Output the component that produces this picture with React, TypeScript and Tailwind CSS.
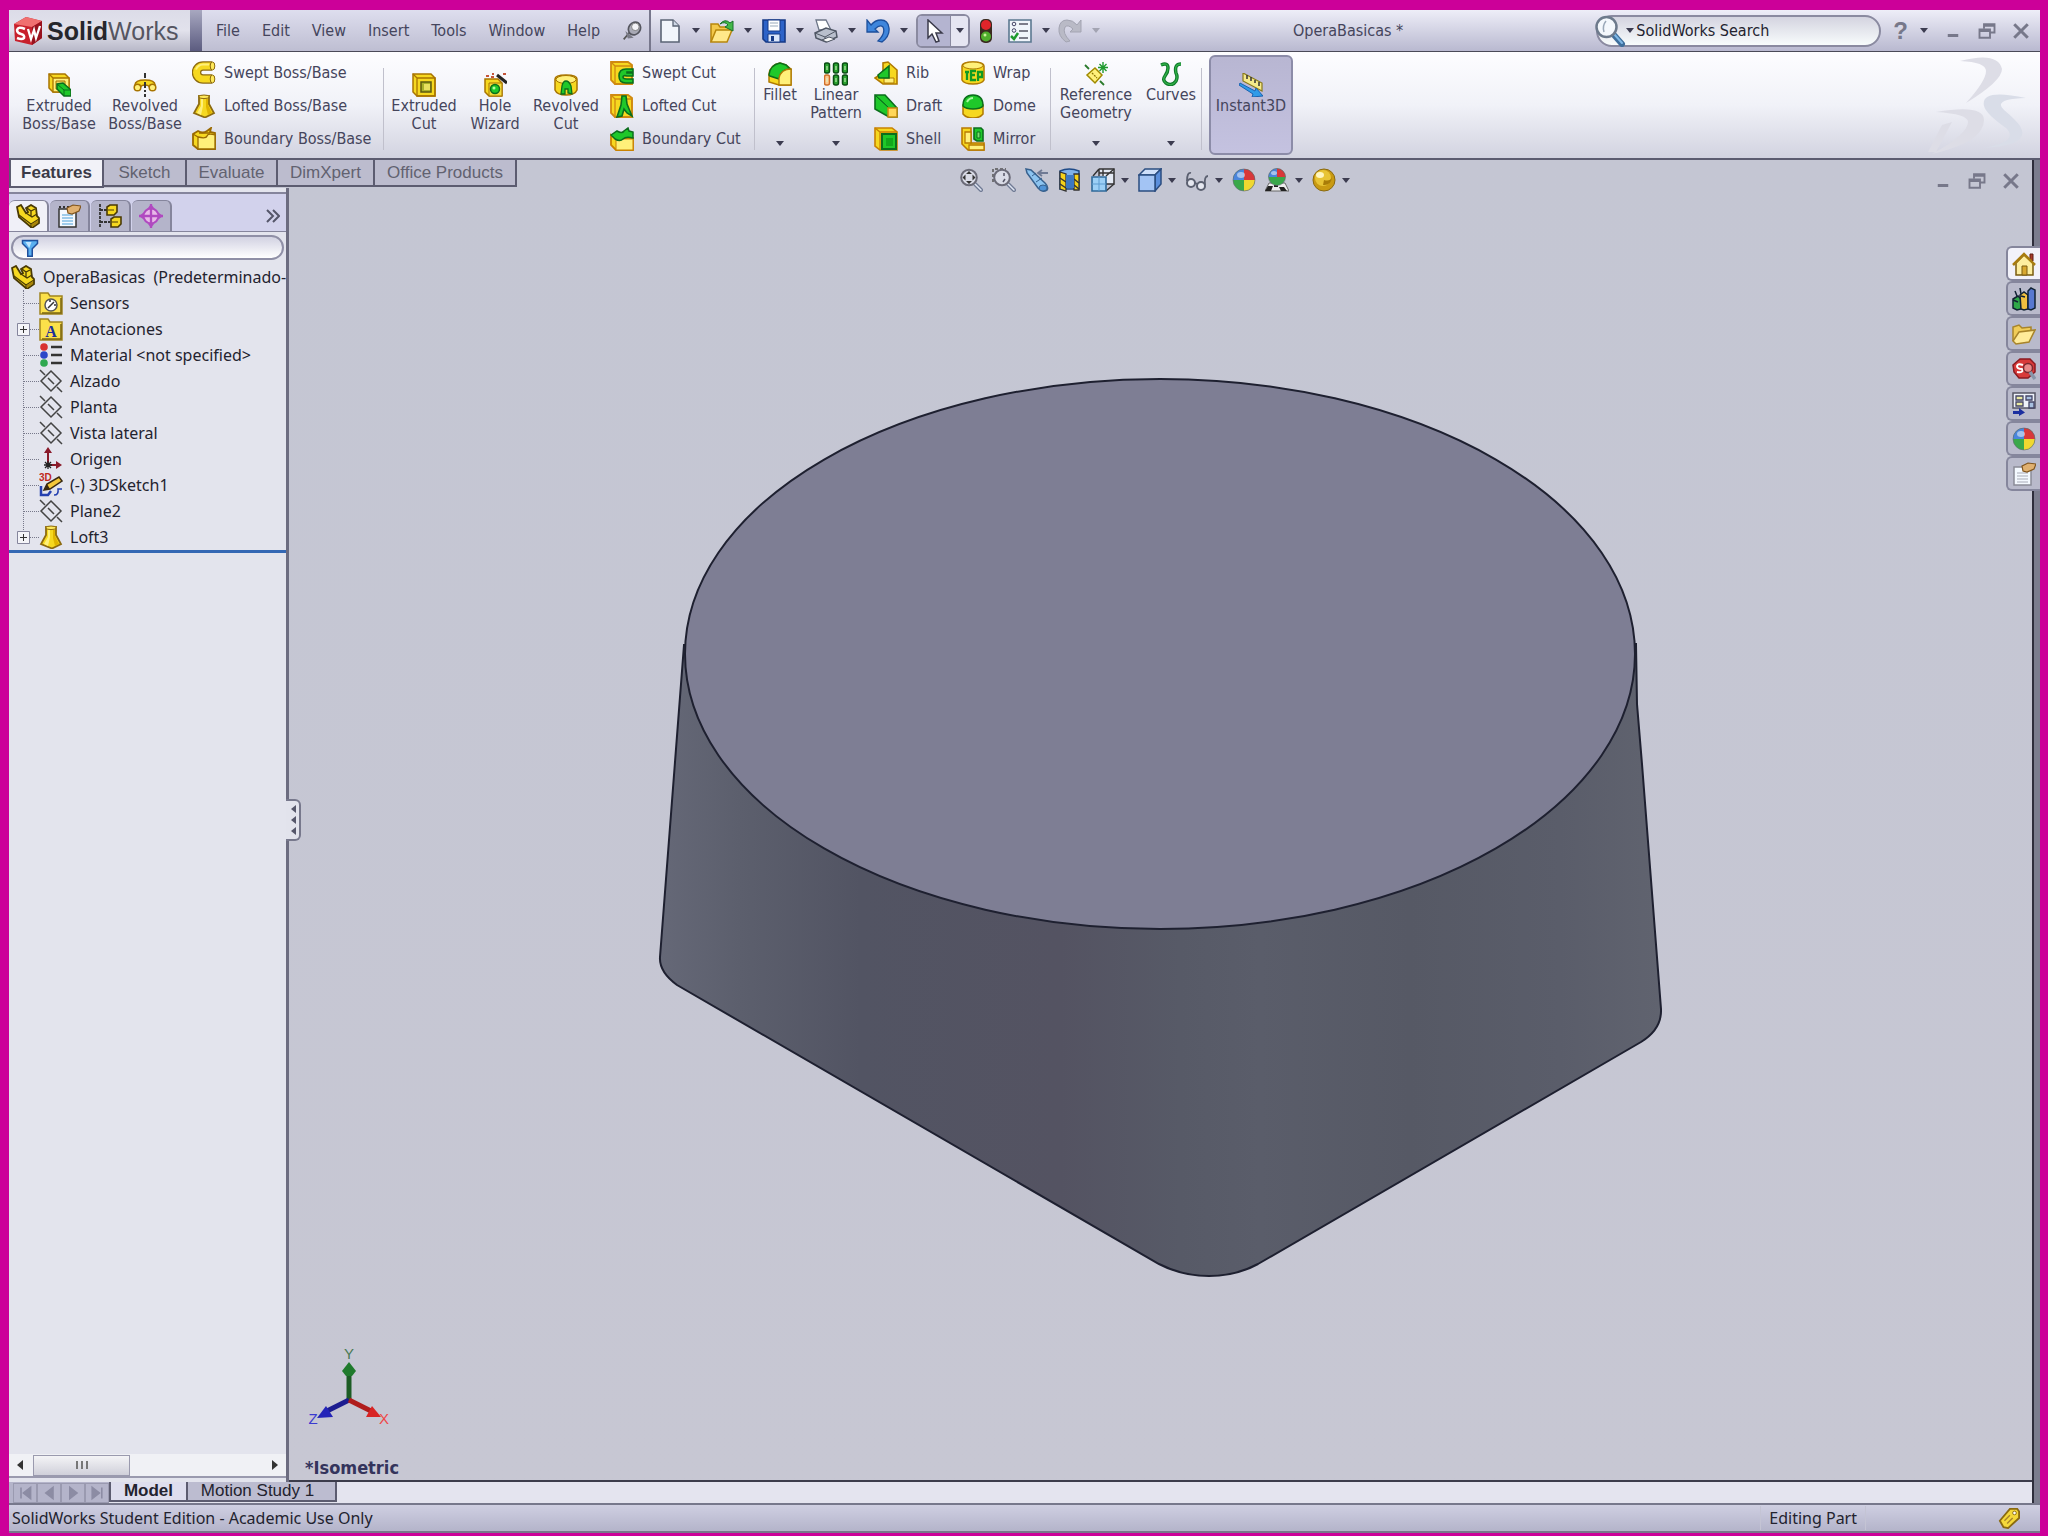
import type { ReactNode } from "react";

const UI = "font-['DejaVu_Sans_Condensed','DejaVu_Sans',sans-serif]";
const TREE = "font-['Noto_Sans','Open_Sans',sans-serif]";
const ARIAL = "font-['Liberation_Sans',Arial,sans-serif]";

type SvgProps = { children: ReactNode; className?: string; box?: string };

const Svg = ({ children, className = "size-6", box = "0 0 24 24" }: SvgProps) => (
  <svg viewBox={box} className={`shrink-0 ${className}`} fill="none" aria-hidden="true">
    {children}
  </svg>
);

const Caret = ({ className = "fill-[#3c3c50]" }: { className?: string }) => (
  <svg viewBox="0 0 8 5" className={`h-[5px] w-2 shrink-0 ${className}`} aria-hidden="true">
    <path d="M0 0h8L4 5z" />
  </svg>
);

const Y = "#f6d820";
const YL = "#fff07a";
const YS = "#a87400";
const G = "#1fc82a";
const GS = "#0b6e1c";

/* ---------- ribbon icons ---------- */

const ExtrudeBoss = () => (
  <Svg>
    <path d="M2 1h16l4 4v14H6l-4-4z" fill={Y} stroke={YS} strokeWidth="1.500" />
    <path d="M6 5h16v14H6zM2 1l4 4" fill={YL} stroke={YS} strokeWidth="1.300" />
    <path d="M9 8h9v8H9z" fill="#e8d860" stroke={YS} />
    <path d="M10 11l6-1 8 7v6h-7l-7-7z" fill={G} stroke={GS} strokeWidth="1.500" />
    <path d="M17 17h7M17 17v6M17 17l-7-6" stroke={GS} />
  </Svg>
);

const RevolveBoss = () => (
  <Svg>
    <path d="M12 0v5M12 8v3M12 17v2M12 21v3" stroke="#333" strokeWidth="2" />
    <path d="M2 12q0-5 10-5t10 5v3h-5q-1-3-5-3t-5 3H2z" fill={Y} stroke={YS} strokeWidth="1.500" />
    <circle cx="4.500" cy="14.500" r="3.300" fill={YL} stroke={YS} strokeWidth="1.500" />
    <circle cx="19.500" cy="14.500" r="3.300" fill={YL} stroke={YS} strokeWidth="1.500" />
    <path d="M12 9v6" stroke="#333" strokeWidth="2" />
  </Svg>
);

const SweptBoss = () => (
  <Svg>
    <path d="M20 5H11a6.500 6.500 0 000 13h9" stroke="#8d6b10" strokeWidth="9.500" />
    <path d="M19 5H11a6.500 6.500 0 000 13h8" stroke={Y} strokeWidth="7" />
    <path d="M17 3.500H11a8 8 0 00-7 5" stroke={YL} strokeWidth="2" />
    <ellipse cx="20.500" cy="5" rx="2.300" ry="4" fill="#ffe95a" stroke="#8d6b10" />
    <ellipse cx="20.500" cy="18" rx="2.300" ry="4" fill="#ffe95a" stroke="#8d6b10" />
  </Svg>
);

const Loft = ({ className }: { className?: string }) => (
  <Svg className={className}>
    <path d="M7 2h10v8l5 9-9 4.500L2 19l5-9z" fill={Y} stroke="#8d6b10" strokeWidth="1.800" />
    <path d="M9 5v7l-4 7 4 2 2-9V5z" fill={YL} />
    <path d="M14 5v8l2 8 4-2-4-8V5z" fill="#e0b400" />
    <ellipse cx="12" cy="2.800" rx="5" ry="1.800" fill="#ffe95a" stroke="#8d6b10" />
  </Svg>
);

const BoundaryBoss = () => (
  <Svg>
    <path d="M1 7l5-3q5 3 9 0l4-3-1 4 5 1v16H6l-5-4z" fill={Y} stroke="#9a6a00" strokeWidth="1.800" />
    <path d="M6 10q8 2 9-1t8-1v14H6z" fill={YL} stroke="#9a6a00" strokeWidth="1.300" />
    <path d="M1 7l5 3M7 6l11 0" stroke="#9a6a00" strokeWidth="1.300" />
  </Svg>
);

const ExtrudeCut = () => (
  <Svg>
    <path d="M1 1h18l4 4v18H5l-4-4z" fill={Y} stroke={YS} strokeWidth="1.500" />
    <path d="M5 5h18v18H5zM1 1l4 4" stroke={YS} strokeWidth="1.300" />
    <path d="M9 9h10v10H9z" fill="#a8b02a" stroke="#5c5a10" strokeWidth="1.500" />
    <path d="M12 11h6v6h-6z" fill="#e8e060" />
  </Svg>
);

const HoleWizard = () => (
  <Svg>
    <path d="M2 6h13l4 4v13H6l-4-4z" fill={Y} stroke={YS} strokeWidth="1.500" />
    <path d="M6 10h13v13H6z" fill="#f2dc3c" stroke={YS} />
    <circle cx="12" cy="16" r="4.500" fill={G} stroke={GS} strokeWidth="1.500" />
    <circle cx="11" cy="15" r="1.500" fill="#b4ffa0" />
    <path d="M14 2l10 8" stroke="#222" strokeWidth="3" />
    <path d="M3 3h3M9 1h2M8 4h3M20 1h3" stroke="#c4553a" strokeWidth="2" />
  </Svg>
);

const RevolveCut = () => (
  <Svg>
    <path d="M1 6q0-4 11-4t11 4v11q-2 5-11 5T1 17z" fill={Y} stroke={YS} strokeWidth="1.500" />
    <ellipse cx="12" cy="6.500" rx="10" ry="4" fill={YL} stroke={YS} />
    <path d="M7 21l1-8q1-5 4-5t5 5l1 8-4-1v-4h-3v5z" fill={G} stroke={GS} strokeWidth="1.300" />
  </Svg>
);

const CutBlock = ({ children }: { children: ReactNode }) => (
  <Svg>
    <path d="M1 1h17l4 3v19H5l-4-4z" fill={Y} stroke="#d08a10" strokeWidth="1.800" />
    <path d="M5 5h17v18H5zM1 1l4 4" stroke="#d08a10" strokeWidth="1.300" />
    {children}
  </Svg>
);

const SweptCut = () => (
  <CutBlock>
    <path d="M23 8h-7q-7 0-7 7t7 7h7v-4h-6q-4 0-4-2t4-1h6v-3h-6v-1h6z" fill={G} stroke={GS} strokeWidth="1.600" />
  </CutBlock>
);
const LoftedCut = () => (
  <CutBlock>
    <path d="M12 2l4 0 1 8 5 12-5-3-3-4-2 7-5 1 4-12z" fill={G} stroke={GS} strokeWidth="1.600" />
  </CutBlock>
);
const BoundaryCut = () => (
  <Svg>
    <path d="M1 8l4 3h18v12H6l-5-5z" fill={Y} stroke="#c98200" strokeWidth="1.800" />
    <path d="M6 12h17v11H6z" fill={YL} stroke="#c98200" />
    <path d="M1 8l6-4q5 3 7 0l4-3 1 3 4 1v6q-7-2-10 1t-8 0z" fill={G} stroke={GS} strokeWidth="1.500" />
  </Svg>
);

const Fillet = () => (
  <Svg>
    <path d="M1 12Q2 3 12 1l6 2 5 4v16H11L1 20z" fill={Y} stroke="#b07a00" strokeWidth="1.500" />
    <path d="M1 13Q2 3 12 1l6 2 4 4q-9 0-11 10L2 14z" fill={G} stroke={GS} strokeWidth="1.500" />
    <path d="M11 23v-7q2-9 12-9v16z" fill={YL} stroke="#b07a00" strokeWidth="1.300" />
  </Svg>
);

const LinearPattern = () => (
  <Svg>
    {[3, 12, 21].map((x) =>
      [6, 18].map((y) => (
        <g key={`${x}-${y}`}>
          <rect
            x={x - 2.5}
            y={y - 5}
            width="5"
            height="10"
            rx="2"
            fill={x === 3 && y === 18 ? "#ffc890" : "#2aa52f"}
            stroke={x === 3 && y === 18 ? "#d0702a" : "#0a4d14"}
            strokeWidth="1.500"
          />
          <path d={`M${x} ${y - 2}v4`} stroke="#d8f8c8" />
        </g>
      )),
    )}
  </Svg>
);

const Rib = () => (
  <Svg>
    <path d="M1 17l8-5V2l5-1 9 8v14H9z" fill={Y} stroke="#b07a00" strokeWidth="1.600" />
    <path d="M10 17h10v5H10z" fill={YL} stroke="#b07a00" />
    <path d="M4 14l11-9v12H5z" fill={G} stroke={GS} strokeWidth="1.600" />
  </Svg>
);
const Draft = () => (
  <Svg>
    <path d="M1 1h10l12 13v9H15L1 15z" fill={G} stroke={GS} strokeWidth="1.600" />
    <path d="M1 1l14 13v9M1 1l14 13h8" stroke={GS} />
    <path d="M14 14h9v9h-9z" fill="#ffd75a" stroke="#c98a10" strokeWidth="1.500" />
  </Svg>
);
const Shell = () => (
  <Svg>
    <path d="M1 1h17l5 4v18H6l-5-4z" fill={Y} stroke="#c98200" strokeWidth="1.600" />
    <path d="M1 1l5 4h17M6 5v18" stroke="#c98200" strokeWidth="1.300" />
    <path d="M8 7h14v15H8z" fill={G} stroke={GS} strokeWidth="2" />
    <path d="M12 11h7v8h-7z" fill="#12a81c" />
  </Svg>
);
const Wrap = () => (
  <Svg>
    <path d="M1 5q0-4 11-4t11 4v14q-2 4-11 4T1 19z" fill={Y} stroke="#b07a00" strokeWidth="1.500" />
    <ellipse cx="12" cy="4.500" rx="10" ry="3.500" fill={YL} stroke="#b07a00" />
    <path d="M4 11h4M6 11v8M15 10h-5v9h5M10 14h4M17 20v-9h4v5h-4" stroke="#0f9a22" strokeWidth="2.300" />
  </Svg>
);
const Dome = () => (
  <Svg>
    <path d="M2 11h20v9q-3 4-10 4T2 20z" fill={Y} stroke="#b07a00" strokeWidth="1.500" />
    <path d="M2 12Q2 1 12 1t10 11q-3 3-10 3T2 12z" fill={G} stroke={GS} strokeWidth="1.500" />
    <path d="M6 8q2-4 6-4" stroke="#a8f8a0" strokeWidth="2" />
  </Svg>
);
const Mirror = () => (
  <Svg>
    <path d="M1 1h9v15h13v7H7l-6-6z" fill={Y} stroke="#b87a00" strokeWidth="1.600" />
    <path d="M4 5h6v11H4zM8 18h15v5H8z" fill={YL} stroke="#b87a00" strokeWidth="1.300" />
    <path d="M13 1h7l2 2v11h-6l-3-2z" fill={G} stroke={GS} strokeWidth="1.600" />
    <path d="M16 5h3v6h-3z" fill="#7de070" stroke={GS} />
  </Svg>
);
const RefGeometry = () => (
  <Svg>
    <path d="M11 6l7 7-7 8-8-8z" fill={YL} stroke="#a08a00" strokeWidth="1.500" />
    <path d="M8 11l5 5" stroke="#8a7400" strokeWidth="1.300" strokeDasharray="2 1" />
    <path d="M1 3l4 4M16 19l4 4" stroke="#2b7a2b" strokeWidth="1.800" />
    <path d="M19 0v11M14 5.500h10M15.500 2l7 7M22.500 2l-7 7" stroke="#1f9a2f" strokeWidth="1.400" />
  </Svg>
);
const Curves = () => (
  <Svg>
    <path d="M2 3q7-3 7 3 0 4-3 8t1 7q6 4 10-2 2-4 0-8-2-9 5-9" stroke="#0d7a2a" strokeWidth="3.500" />
    <path d="M2 3q7-3 7 3 0 4-3 8t1 7q6 4 10-2 2-4 0-8-2-9 5-9" stroke="#32b048" strokeWidth="1.300" />
  </Svg>
);
const Instant3D = () => (
  <Svg>
    <path d="M4 0l19 10v8L4 8z" fill="#f5e98a" stroke="#8a7a1a" strokeWidth="1.200" />
    <path d="M8 2v4M12 4v4M16 7v3M20 9v4" stroke="#333" strokeWidth="1.500" />
    <path d="M1 10l15 8 1-3 7 8-11 1 1-3L0 12z" fill="#2f9be8" stroke="#1a62b0" />
  </Svg>
);

/* ---------- title bar icons ---------- */

const Pin = () => (
  <Svg className="size-5">
    <path d="M2 22l7-8" stroke="#555" strokeWidth="2" />
    <ellipse cx="15" cy="9" rx="7" ry="8" fill="#a9aab6" stroke="#55565f" strokeWidth="2" transform="rotate(35 15 9)" />
    <circle cx="16" cy="7" r="4.500" fill="#f3f3f7" stroke="#777" />
    <path d="M4 12l10 8-7 1z" fill="#7a7b86" />
  </Svg>
);
const NewDoc = () => (
  <Svg>
    <path d="M3 1h12l6 6v16H3z" fill="#f1f5fb" stroke="#5b6475" strokeWidth="1.600" />
    <path d="M15 1v6h6" fill="#cfd8e6" stroke="#5b6475" strokeWidth="1.300" />
  </Svg>
);
const OpenDoc = () => (
  <Svg>
    <path d="M1 23V5h7l2 3h10v5" fill="#f3c84a" stroke="#b8860b" strokeWidth="1.500" />
    <path d="M1 23l5-12h16l-5 12z" fill="#ffe88a" stroke="#b8860b" strokeWidth="1.500" />
    <path d="M10 5q5-6 10-1l3-2v10l-8-4 3-2q-3-4-8-1z" fill="#43b84a" stroke="#19702a" />
  </Svg>
);
const SaveDoc = () => (
  <Svg>
    <path d="M1 1h22v22H4l-3-3z" fill="#2d63c8" stroke="#163a86" strokeWidth="1.600" />
    <path d="M6 1h12v11H6z" fill="#fff" stroke="#163a86" />
    <path d="M8 4h8M8 7h8" stroke="#9ab" />
    <path d="M6 15h12v8H6z" fill="#dbe6fa" stroke="#163a86" />
    <path d="M9 17h3v5H9z" fill="#163a86" />
  </Svg>
);
const PrintDoc = () => (
  <Svg>
    <path d="M5 11L2 1l10 0 5 10z" fill="#fff" stroke="#6d7688" strokeWidth="1.300" />
    <path d="M1 14l11-5 10 3 1 6-11 5-10-4z" fill="#b9bfcc" stroke="#4f5664" strokeWidth="1.500" />
    <path d="M1 14l10 4 11-6M11 18v5" stroke="#4f5664" />
    <path d="M8 21l7-3 6 2-8 3z" fill="#f7f7f7" stroke="#4f5664" />
  </Svg>
);
const Undo = () => (
  <Svg>
    <path d="M1 1v12h11L9 10q5-5 8-2 3 6-5 14l4 1q8-6 7-14-1-8-8-8-6 0-10 5z" fill="#3f86dc" stroke="#1c4f9c" strokeWidth="1.300" />
  </Svg>
);
const Redo = () => (
  <Svg>
    <path d="M23 1v12H12l3-3q-5-5-8-2-3 6 5 14l-4 1Q0 17 1 9q1-8 8-8 6 0 10 5z" fill="#b9bac6" stroke="#a3a4b2" />
  </Svg>
);
const Cursor = () => (
  <Svg>
    <path d="M6 1v18l4-4 4 8 3-1-3-8h6z" fill="#fff" stroke="#3b3b4b" strokeWidth="1.500" />
  </Svg>
);
const TrafficLight = () => (
  <Svg className="h-6 w-4" box="0 0 16 24">
    <rect x="2" y="0" width="12" height="24" rx="5" fill="#3a2a20" />
    <circle cx="8" cy="6" r="5" fill="#e0252a" />
    <circle cx="8" cy="17.500" r="5" fill="#4fae2c" />
    <circle cx="7" cy="16" r="1.500" fill="#c8f09a" />
  </Svg>
);
const Options = () => (
  <Svg>
    <path d="M1 1h22v22H1z" fill="#f0f5fb" stroke="#5b7890" strokeWidth="1.600" />
    <path d="M11 5h9M11 12h9M11 19h9" stroke="#556" strokeWidth="1.500" />
    <circle cx="6" cy="5" r="1.800" stroke="#446" />
    <circle cx="6" cy="11.500" r="1.800" stroke="#446" />
    <path d="M3 17l3 3 4-6" stroke="#1f9a2f" strokeWidth="2.500" />
  </Svg>
);
const SearchGlass = () => (
  <Svg className="size-8" box="0 0 32 32">
    <path d="M20 20l8 9" stroke="#3f6f9c" strokeWidth="6" strokeLinecap="round" />
    <path d="M20 19l8 9" stroke="#7fb8e6" strokeWidth="2" strokeLinecap="round" />
    <circle cx="12.500" cy="12" r="10" fill="#f4f8fc" stroke="#6d7a8c" strokeWidth="2.500" />
    <path d="M10 17q-2-6 2-11" stroke="#9aa8b8" strokeWidth="1.500" />
  </Svg>
);

/* ---------- heads-up icons ---------- */

const Glass = ({ dashed }: { dashed?: boolean }) => (
  <Svg>
    {dashed && <path d="M1 14V1h13" stroke="#555" strokeWidth="1.500" strokeDasharray="3 2" />}
    <path d="M16 16l6 6" stroke="#6f7a94" strokeWidth="4" strokeLinecap="round" />
    <path d="M16 16l6 6" stroke="#dfe5f2" strokeWidth="1.500" strokeLinecap="round" />
    <circle cx="10" cy="9.500" r="7.800" fill="#d9dbe6" stroke="#6b6b78" strokeWidth="2" />
    {!dashed && <path d="M10 3l3 3H7zM10 16l3-3H7zM3.500 9.500l3-3v6zM16.500 9.500l-3-3v6z" fill="#333" />}
    {dashed && <path d="M12 5v3M13 11l-2 3" stroke="#556" strokeWidth="1.500" />}
  </Svg>
);
const PrevView = () => (
  <Svg>
    <path d="M1 1l5 1 14 13q4 4 2 7-5 3-9-2L2 5z" fill="#8cc4f0" stroke="#37618e" strokeWidth="1.500" />
    <path d="M7 8l4-3M11 14l6-4" stroke="#37618e" />
    <ellipse cx="18" cy="20" rx="4" ry="3" fill="#4f94d8" stroke="#37618e" />
    <path d="M14 5h9M17 2l-4 3 4 3" stroke="#6f7a94" strokeWidth="1.800" />
  </Svg>
);
const Section = () => (
  <Svg>
    <path d="M2 3q9-4 19 0v18H2z" fill="#7fb2ea" stroke="#1e4a86" strokeWidth="1.500" />
    <path d="M2 4l6 2v17l-6-2z" fill="#f5d21a" stroke="#333" strokeWidth="1.300" />
    <path d="M16 6h5v16h-5z" fill="#f5d21a" stroke="#333" strokeWidth="1.300" />
    <path d="M2 10l6 4M2 16l6 4M16 11l5 4M16 17l5 4" stroke="#333" strokeWidth="1.500" />
    <path d="M8 7h8v13H8z" fill="#3c78c4" />
  </Svg>
);
const ViewOrient = () => (
  <Svg>
    <path d="M8 1h15v15h-8" fill="#e4eaf4" stroke="#333" strokeWidth="1.500" />
    <path d="M8 1v7M2 8l6-7M15 8l8-7M15 23l8-7M12 1v7M8 5h15" stroke="#333" strokeWidth="1.400" />
    <path d="M1 9h14v14H1z" fill="#9cd0f6" stroke="#2f6a9a" strokeWidth="1.600" />
    <path d="M1 16h14M8 9v14" stroke="#5c9cd0" />
  </Svg>
);
const DisplayStyle = () => (
  <Svg>
    <path d="M1 7l6-6h16l-6 6z" fill="#cfe0fa" stroke="#2b4d80" strokeWidth="1.500" />
    <path d="M17 7l6-6v15l-6 7z" fill="#5b8fdc" stroke="#2b4d80" strokeWidth="1.500" />
    <path d="M1 7h16v16H1z" fill="#a3c4f4" stroke="#2b4d80" strokeWidth="1.500" />
  </Svg>
);
const HideShow = () => (
  <Svg>
    <circle cx="6" cy="15" r="4" fill="#e6e8f0" stroke="#5b6070" strokeWidth="2" />
    <circle cx="16" cy="18" r="4" fill="#e6e8f0" stroke="#5b6070" strokeWidth="2" />
    <path d="M2 13Q2 4 6 5M20 17q-1-9 3-9M10 15l3 1" stroke="#5b6070" strokeWidth="1.800" />
  </Svg>
);
const Ball = ({ className }: { className?: string }) => (
  <Svg className={className}>
    <circle cx="12" cy="12" r="11" fill="#3aa84a" />
    <path d="M12 12V1a11 11 0 0111 11z" fill="#d8383a" />
    <path d="M12 12h11a11 11 0 01-11 11z" fill="#f0d830" />
    <path d="M12 12H1A11 11 0 0112 1z" fill="#4a86dc" />
    <ellipse cx="9" cy="7" rx="4" ry="3" fill="#fff" opacity=".5" />
    <circle cx="12" cy="12" r="11" stroke="#667" opacity=".6" />
  </Svg>
);
const Scene = () => (
  <Svg>
    <path d="M4 15h16l4 8H0z" fill="#eee" stroke="#666" />
    <path d="M3 18h5l-2 5H0zM14 19h5l3 4h-6zM9 17h4v2H9z" fill="#222" />
    <circle cx="12" cy="9" r="8.500" fill="#3aa84a" />
    <path d="M12 9V.5A8.500 8.500 0 0120.500 9z" fill="#d8383a" />
    <path d="M12 9H3.500A8.500 8.500 0 0112 .5z" fill="#4a86dc" />
    <ellipse cx="9" cy="5" rx="3" ry="2" fill="#fff" opacity=".5" />
    <circle cx="12" cy="9" r="8.500" stroke="#667" opacity=".6" />
  </Svg>
);
const GoldBall = () => (
  <Svg>
    <circle cx="12" cy="12" r="11" fill="#c99a12" stroke="#8a6a10" />
    <circle cx="11" cy="10" r="8" fill="#e8c435" />
    <ellipse cx="8" cy="7" rx="4" ry="3" fill="#fff6c0" />
    <path d="M12 12q6 2 8-3-1 9-9 8z" fill="#a87c08" />
  </Svg>
);

/* ---------- tree icons ---------- */

const Part = () => (
  <Svg>
    <path d="M1 3l4-2 5 8 2-1-2-4 5-3 5 3 1 8 2 2v5l-7 5L3 13z" fill={Y} stroke="#4a3a05" strokeWidth="1.800" />
    <path d="M10 9l6 4 5-3M3 11l12 9v4M15 20l8-5M11 4l4 3 4-2M15 7v5" stroke="#4a3a05" strokeWidth="1.300" />
    <path d="M16 20l6-4v3l-6 4z" fill="#a88408" />
  </Svg>
);
const Folder = ({ children }: { children: ReactNode }) => (
  <Svg>
    <path d="M1 23V2h8l2 3h12v18z" fill="#fbe04a" stroke="#a08420" strokeWidth="1.500" />
    <path d="M22 7v15H3" stroke="#7a6410" strokeWidth="1.500" />
    {children}
  </Svg>
);
const Sensors = () => (
  <Folder>
    <circle cx="12" cy="14" r="6" fill="#fff" stroke="#555" strokeWidth="1.500" />
    <path d="M9 17l6-6M11 9v2M17 14h-2" stroke="#333" strokeWidth="1.500" />
  </Folder>
);
const Annotations = () => (
  <Folder>
    <text x="12" y="20" textAnchor="middle" className="fill-[#1c2f9a] font-['Liberation_Serif',serif] text-[16px] font-bold">
      A
    </text>
  </Folder>
);
const Material = () => (
  <Svg>
    <circle cx="5" cy="4" r="3.800" fill="#d83030" />
    <circle cx="5" cy="12" r="3.800" fill="#2c48c8" />
    <circle cx="5" cy="20" r="3.800" fill="#2fa850" />
    <path d="M12 4h11M12 12h11M12 20h11" stroke="#333" strokeWidth="2.300" />
  </Svg>
);
const Plane = () => (
  <Svg>
    <path d="M12 2l10 10-10 10L2 12z" stroke="#444" strokeWidth="1.500" />
    <path d="M1 1l5 5M9 9l6 6M18 18l5 5" stroke="#444" strokeWidth="1.500" />
  </Svg>
);
const Origin = () => (
  <Svg>
    <path d="M9 5v13h10" stroke="#8a1a2a" strokeWidth="2" />
    <path d="M9 0l4 6H5zM23 18l-6-4v8z" fill="#8a1a2a" />
    <path d="M9 14v8M5 18h8M6 15l6 6M12 15l-6 6" stroke="#222" strokeWidth="1.300" />
  </Svg>
);
const Sketch3D = () => (
  <Svg>
    <text x="0" y="8" className="fill-[#c0281c] font-['Liberation_Sans',sans-serif] text-[10px] font-bold">
      3D
    </text>
    <path d="M2 13v9h7l3-4" stroke="#2440b0" strokeWidth="2.500" />
    <path d="M15 22q5 0 4-6h4" stroke="#2440b0" strokeWidth="1.500" />
    <path d="M5 17l3-6L20 4l3 4-12 8z" fill="#f5c83a" stroke="#3a2a10" strokeWidth="1.500" />
    <path d="M5 17l3-6 3 5z" fill="#3a2a10" />
  </Svg>
);
const Properties = ({ plain }: { plain?: boolean }) => (
  <Svg>
    <path d="M2 5h17v18H2z" fill="#f4f9ff" stroke={plain ? "#8a8c98" : "#333"} strokeWidth="1.500" />
    <path d="M5 11h11M5 14h11M5 17h11M5 20h11" stroke={plain ? "#a8acb8" : "#4aa0d8"} strokeWidth="1.200" />
    {!plain && <path d="M2 3h17" stroke="#333" strokeWidth="2" strokeDasharray="2 2" />}
    <path d="M10 4l6-3 8 1-2 5-7 3-4-1z" fill="#e0b070" stroke="#80541c" strokeWidth="1.200" />
  </Svg>
);
const Config = () => (
  <Svg>
    <path d="M2 0v24M2 6h8M2 18h10" stroke="#333" strokeWidth="1.800" strokeDasharray="3 1" />
    <path d="M9 3l3-2h7v7l-3 3H9z" fill={Y} stroke="#4a3a05" strokeWidth="1.600" />
    <path d="M13 15l3-2h7v7l-3 3h-7z" fill={Y} stroke="#4a3a05" strokeWidth="1.600" />
    <path d="M10 6h6M14 18h6" stroke="#4a3a05" />
  </Svg>
);
const Target = () => (
  <Svg>
    <circle cx="12" cy="12" r="7.500" fill="#e8b8e8" stroke="#b04ac0" strokeWidth="2" />
    <path d="M12 0v24M0 12h24" stroke="#b04ac0" strokeWidth="2.300" />
    <path d="M12 0l3 4H9zM12 24l3-4H9zM0 12l4-3v6zM24 12l-4-3v6z" fill="#b04ac0" />
  </Svg>
);

/* ---------- task pane icons ---------- */

const House = () => (
  <Svg>
    <path d="M18 2h3v7h-3z" fill="#a83a2a" stroke="#5c1c14" />
    <path d="M4 11v12h17V11l-9-8z" fill="#fdeea0" stroke="#7a5c10" strokeWidth="1.500" />
    <path d="M1 13L12 2l11 11" stroke="#a87c10" strokeWidth="2.500" />
    <path d="M10 14h5v9h-5z" fill="#d8a830" stroke="#7a5c10" />
  </Svg>
);
const Library = () => (
  <Svg>
    <path d="M1 12l5-3 3 3v10l-4 1-4-2z" fill="#2fa848" stroke="#123" strokeWidth="1.500" />
    <path d="M8 8l4-3 4 3v14l-4 1-3-1z" fill="#f0c040" stroke="#123" strokeWidth="1.500" />
    <path d="M16 4l3-3 4 2v18l-4 2-3-1z" fill="#5878d0" stroke="#123" strokeWidth="1.500" />
    <path d="M3 4l2 5M8 1l1 6M1 13l5 2M9 9l4 1" stroke="#123" strokeWidth="1.500" />
  </Svg>
);
const FolderOpen = () => (
  <Svg>
    <path d="M1 19V5l6-2 3 3 9-1v5" fill="#f0cc58" stroke="#a8842a" strokeWidth="1.500" />
    <path d="M1 19l6-9 16-2-6 12-13 2z" fill="#ffeb9a" stroke="#a8842a" strokeWidth="1.500" />
  </Svg>
);
const SwSearch = () => (
  <Svg>
    <path d="M1 8l7-6h10l5 5v8l-7 6H7l-5-6z" fill="#d83a3a" stroke="#8a1a20" strokeWidth="1.500" />
    <path d="M11 8q-5-2-6 1 0 3 5 3 2 4-5 3" stroke="#fff" strokeWidth="2" />
    <circle cx="16" cy="11" r="4.500" fill="#e88a8a" stroke="#7a2a30" strokeWidth="1.500" />
    <path d="M18 15l5 7" stroke="#8894a8" strokeWidth="3.500" />
  </Svg>
);
const Palette = () => (
  <Svg>
    <path d="M1 1h22v15H1z" fill="#eef2fa" stroke="#556" strokeWidth="1.500" />
    <path d="M4 4h7v4H4zM4 10h7v4H4z" fill="#e8e8a0" stroke="#446" strokeWidth="1.300" />
    <path d="M14 4h6v4h-6zM17 10h5v6h-5z" fill="#a8c0e0" stroke="#446" strokeWidth="1.300" />
    <path d="M1 19h6v-3l6 4.500L7 24v-2H1z" fill="#1c2fa0" />
  </Svg>
);

const Minimize = () => (
  <Svg className="size-[18px]">
    <path d="M5 16h14v4H5z" fill="#77788a" />
  </Svg>
);
const Restore = () => (
  <Svg className="size-[18px]">
    <path d="M8 9V3h14v11h-6M8 5h14" stroke="#77788a" strokeWidth="2.500" />
    <path d="M2 10h14v11H2zM2 12h14" stroke="#77788a" strokeWidth="2.500" />
  </Svg>
);
const Close = () => (
  <Svg className="size-[18px]">
    <path d="M3 3l18 18M21 3L3 21" stroke="#77788a" strokeWidth="4" />
  </Svg>
);

/* ---------- title bar ---------- */

const menus = ["File", "Edit", "View", "Insert", "Tools", "Window", "Help"];

const quickTools = [
  { name: "New", icon: <NewDoc /> },
  { name: "Open", icon: <OpenDoc /> },
  { name: "Save", icon: <SaveDoc /> },
  { name: "Print", icon: <PrintDoc /> },
  { name: "Undo", icon: <Undo /> },
];

const TitleBar = () => (
  <header className={`flex h-[42px] shrink-0 items-stretch border-b border-[#4a4a58] bg-gradient-to-b from-[#eeeef8] to-[#b9b9d0] ${UI}`}>
    <div className="flex w-[181px] shrink-0 items-center gap-1 bg-gradient-to-b from-[#dcdce8] via-[#e2e2ec] to-[#b8b8c8] pl-1">
      <Svg className="size-[30px]" box="0 0 30 30">
        <path d="M1 8L13 1l16 4v17l-10 7L2 25z" fill="#c8202c" />
        <path d="M1 8L13 1l16 4-10 6z" fill="#f07070" />
        <path d="M19 11l10-6v17l-10 7z" fill="#98121e" />
        <path d="M12 13q-7-3-8 1 0 3 4 4t3 4q-2 2-7 0" stroke="#fff" strokeWidth="2.500" />
        <path d="M15 13l3 10 3-9 2 8 4-12" stroke="#fff" strokeWidth="2.300" />
      </Svg>
      <span className={`text-[25px] leading-7 text-[#555561] ${ARIAL}`}>
        <b className="text-[#26262c]">Solid</b>Works
      </span>
    </div>
    <div className="w-3 shrink-0 bg-gradient-to-b from-[#a8a8c0] to-[#5c5c80]" />
    <nav className="flex shrink-0 items-center gap-[22px] border-r-2 border-[#77778c] bg-gradient-to-b from-[#dedeee] to-[#bebed2] pr-[7px] pl-[14px] text-[16px] text-[#45455c]">
      {menus.map((m) => (
        <button key={m}>{m}</button>
      ))}
      <button aria-label="Pin menu">
        <Pin />
      </button>
    </nav>
    <div className="flex shrink-0 items-center gap-2 pl-[7px]">
      <div className="flex items-center gap-2.5">
        {quickTools.map((t) => (
          <button key={t.name} aria-label={t.name} className="flex items-center gap-2.5">
            {t.icon}
            <Caret />
          </button>
        ))}
      </div>
      <div className="flex h-[34px] items-stretch overflow-hidden rounded-md border-2 border-[#8a8aa0]">
        <button aria-label="Select" className="flex w-8 items-center justify-center bg-[#b4b4d0]">
          <Cursor />
        </button>
        <button aria-label="Select options" className="flex w-[18px] items-center justify-center border-l border-[#8a8aa0] bg-[#e6e6f2]">
          <Caret />
        </button>
      </div>
      <button aria-label="Rebuild">
        <TrafficLight />
      </button>
      <button aria-label="Options" className="flex items-center gap-2.5 pl-1.5">
        <Options />
        <Caret />
      </button>
      <button aria-label="Redo" className="flex items-center gap-2.5" disabled>
        <Redo />
        <Caret className="fill-[#a3a4b2]" />
      </button>
    </div>
    <h1 className="flex min-w-0 flex-1 items-center justify-center text-[16px] text-[#45455c]">OperaBasicas *</h1>
    <div className="flex shrink-0 items-center">
      <label className="flex h-8 w-[285px] items-center rounded-full border-2 border-[#8a8aa0] bg-gradient-to-b from-[#d4d4e0] to-[#f8fcfc]">
        <span className="-ml-1 flex">
          <SearchGlass />
        </span>
        <Caret />
        <input
          aria-label="Search"
          defaultValue="SolidWorks Search"
          className="ml-0.5 min-w-0 flex-1 bg-transparent text-[16px] text-[#23232f] outline-none"
        />
      </label>
      <button aria-label="Help" className={`ml-3 text-[24px] leading-7 font-bold text-[#77788a] ${ARIAL}`}>
        ?
      </button>
      <button aria-label="Help options" className="mx-3">
        <Caret />
      </button>
      <div className="flex items-center gap-4 pr-[10px] pl-1">
        <button aria-label="Minimize">
          <Minimize />
        </button>
        <button aria-label="Restore">
          <Restore />
        </button>
        <button aria-label="Close">
          <Close />
        </button>
      </div>
    </div>
  </header>
);

/* ---------- ribbon ---------- */

type BigProps = { icon: ReactNode; lines: string[]; className: string; menu?: boolean };

const BigButton = ({ icon, lines, className, menu }: BigProps) => (
  <button className={`flex shrink-0 flex-col items-center ${menu ? "pt-[10px] pb-3" : "pt-[21px]"} ${className}`}>
    {icon}
    {lines.map((l) => (
      <span key={l} className="leading-[18px] whitespace-nowrap">
        {l}
      </span>
    ))}
    {menu && (
      <span className="mt-auto">
        <Caret />
      </span>
    )}
  </button>
);

type SmallItem = { icon: ReactNode; label: string };

const SmallColumn = ({ items, className }: { items: SmallItem[]; className: string }) => (
  <div className={`flex shrink-0 flex-col pt-1 ${className}`}>
    {items.map((i) => (
      <button key={i.label} className="flex h-[33px] items-center gap-2 text-left whitespace-nowrap">
        {i.icon}
        {i.label}
      </button>
    ))}
  </div>
);

const Separator = () => <div className="mt-4 mb-2 w-px shrink-0 bg-[#c0c0cc]" />;

const Ribbon = () => (
  <section
    className={`flex h-[108px] shrink-0 items-stretch border-b-2 border-[#5c5c70] bg-gradient-to-b from-[#fdfdff] via-[#f1f2f8] to-[#d2d3e0] text-[16px] text-[#45455c] ${UI}`}>
    <BigButton icon={<ExtrudeBoss />} lines={["Extruded", "Boss/Base"]} className="ml-[7px] w-[86px]" />
    <BigButton icon={<RevolveBoss />} lines={["Revolved", "Boss/Base"]} className="w-[86px]" />
    <SmallColumn
      className="ml-1 w-[191px]"
      items={[
        { icon: <SweptBoss />, label: "Swept Boss/Base" },
        { icon: <Loft />, label: "Lofted Boss/Base" },
        { icon: <BoundaryBoss />, label: "Boundary Boss/Base" },
      ]}
    />
    <Separator />
    <BigButton icon={<ExtrudeCut />} lines={["Extruded", "Cut"]} className="ml-1 w-[72px]" />
    <BigButton icon={<HoleWizard />} lines={["Hole", "Wizard"]} className="w-[70px]" />
    <BigButton icon={<RevolveCut />} lines={["Revolved", "Cut"]} className="w-[72px]" />
    <SmallColumn
      className="ml-2 w-36"
      items={[
        { icon: <SweptCut />, label: "Swept Cut" },
        { icon: <LoftedCut />, label: "Lofted Cut" },
        { icon: <BoundaryCut />, label: "Boundary Cut" },
      ]}
    />
    <Separator />
    <BigButton menu icon={<Fillet />} lines={["Fillet"]} className="w-[50px]" />
    <BigButton menu icon={<LinearPattern />} lines={["Linear", "Pattern"]} className="w-[62px]" />
    <SmallColumn
      className="ml-[7px] w-[87px]"
      items={[
        { icon: <Rib />, label: "Rib" },
        { icon: <Draft />, label: "Draft" },
        { icon: <Shell />, label: "Shell" },
      ]}
    />
    <SmallColumn
      className="w-[89px]"
      items={[
        { icon: <Wrap />, label: "Wrap" },
        { icon: <Dome />, label: "Dome" },
        { icon: <Mirror />, label: "Mirror" },
      ]}
    />
    <Separator />
    <BigButton menu icon={<RefGeometry />} lines={["Reference", "Geometry"]} className="w-[90px]" />
    <BigButton menu icon={<Curves />} lines={["Curves"]} className="w-[60px]" />
    <Separator />
    <button className="my-[3px] ml-[7px] flex w-[84px] shrink-0 flex-col items-center rounded-md border-2 border-[#8c8ca8] bg-gradient-to-b from-[#b8b6d2] to-[#c4c2e0] pt-4 leading-[18px]">
      <Instant3D />
      Instant3D
    </button>
    <Svg className="mt-1 mr-3 ml-auto h-[98px] w-[100px]" box="0 0 100 98">
      <path d="M32 5q38-10 42 8 0 12-36 34 20-22 20-32 0-9-26-10z" fill="#dddde6" />
      <path d="M8 56q48-8 48 8 0 22-52 34 36-20 36-32 0-8-32-10z" fill="#dddde6" />
      <path d="M24 66L8 96H0l14-27z" fill="#dddde6" />
      <path d="M98 42q-46-10-42 8 2 8 22 22 14 14-24 20 50-2 38-22-4-6-16-16-12-11 22-12z" fill="#d9dde8" />
    </Svg>
  </section>
);

const tabs = [
  { name: "Sketch", width: "w-[83px]" },
  { name: "Evaluate", width: "w-[91px]" },
  { name: "DimXpert", width: "w-[97px]" },
  { name: "Office Products", width: "w-[142px]" },
];

const CommandTabs = () => (
  <div className={`flex h-7 shrink-0 items-start text-[17px] ${ARIAL}`}>
    <button className="h-7 w-[95px] border-r-2 border-b-2 border-l-2 border-[#5c5c70] bg-[#f2f2f8] font-bold text-[#3a3a48]">
      Features
    </button>
    {tabs.map((t) => (
      <button key={t.name} className={`h-[27px] border-r-2 border-b-2 border-[#5c5c70] bg-[#bcbcce] text-[#626270] ${t.width}`}>
        {t.name}
      </button>
    ))}
  </div>
);

/* ---------- feature manager ---------- */

const panelTabs = [
  { name: "FeatureManager", icon: <Part /> },
  { name: "PropertyManager", icon: <Properties /> },
  { name: "ConfigurationManager", icon: <Config /> },
  { name: "DimXpertManager", icon: <Target /> },
];

const tree = [
  { label: "Sensors", icon: <Sensors /> },
  { label: "Anotaciones", icon: <Annotations />, open: true },
  { label: "Material <not specified>", icon: <Material /> },
  { label: "Alzado", icon: <Plane /> },
  { label: "Planta", icon: <Plane /> },
  { label: "Vista lateral", icon: <Plane /> },
  { label: "Origen", icon: <Origin /> },
  { label: "(-) 3DSketch1", icon: <Sketch3D /> },
  { label: "Plane2", icon: <Plane /> },
  { label: "Loft3", icon: <Loft />, open: true },
];

const FeaturePanel = () => (
  <aside className="flex w-[280px] shrink-0 flex-col border-r-[3px] border-[#6c6c80] bg-[#e3e4ed]">
    <div className="mt-1 flex items-end border-t-2 border-b border-[#85859c] bg-[#d2d2ec] pt-1.5">
      {panelTabs.map((t, i) => (
        <button
          key={t.name}
          aria-label={t.name}
          className={`mr-px flex h-[31px] w-10 items-center justify-center rounded-t-md border-t border-r-2 border-[#85859c] ${i === 0 ? "bg-[#f0f0f8]" : "bg-[#b4b4ca]"}`}>
          {t.icon}
        </button>
      ))}
      <button aria-label="Expand panel" className="mr-1.5 mb-2 ml-auto">
        <Svg className="size-3.5" box="0 0 14 14">
          <path d="M1 1l6 6-6 6M7 1l6 6-6 6" stroke="#55566a" strokeWidth="2" />
        </Svg>
      </button>
    </div>
    <label className="mx-0.5 mt-[3px] flex h-[25px] shrink-0 items-center rounded-full border-2 border-[#8f8fa6] bg-gradient-to-b from-[#d2d2e2] to-white pl-2">
      <Svg className="size-[18px]">
        <path d="M2 2h20v4l-7 7v10H9V13L2 6z" fill="#5ab0f0" stroke="#1f4f9c" strokeWidth="2" />
        <path d="M6 4h8l-3 8z" fill="#c0e4ff" />
      </Svg>
      <input aria-label="Filter" className="min-w-0 flex-1 bg-transparent outline-none" />
    </label>
    <div className={`flex flex-col overflow-hidden border-b-[3px] border-[#3468b4] pt-1 text-[16px] text-[#23232f] ${TREE}`}>
      <div className="flex h-[26px] items-center gap-2 pl-0.5 whitespace-pre">
        <Part />
        <span>OperaBasicas  (Predeterminado-</span>
      </div>
      <ul className="relative">
        <li aria-hidden="true" className="absolute top-0 bottom-3 left-[14px] border-l border-dotted border-[#77788a]" />
        {tree.map((n) => (
          <li key={n.label} className="relative flex h-[26px] items-center whitespace-nowrap">
            <span className="flex w-[30px] shrink-0 items-center pl-2">
              {n.open ? (
                <button aria-label={`Expand ${n.label}`} className="flex">
                  <Svg className="size-[13px]" box="0 0 13 13">
                    <path d="M.5.5h12v12H.5z" fill="#f4f4f8" stroke="#85859c" />
                    <path d="M3 6.500h7M6.500 3v7" stroke="#333" />
                  </Svg>
                </button>
              ) : (
                <span className="w-1.5" />
              )}
              <span className="flex-1 border-t border-dotted border-[#77788a]" />
            </span>
            {n.icon}
            <span className="ml-[7px]">{n.label}</span>
          </li>
        ))}
      </ul>
    </div>
    <div className="mt-auto mb-1 flex h-6 shrink-0 items-center border-b-2 border-[#9a9aae] bg-[#f0f1f5] px-1.5">
      <button aria-label="Scroll left">
        <Svg className="size-2.5" box="0 0 10 10">
          <path d="M8 0v10L2 5z" fill="#333" />
        </Svg>
      </button>
      <div className="ml-2 flex h-[21px] w-[97px] items-center justify-center gap-[3px] border border-[#9a9aae] bg-gradient-to-b from-[#f4f4f6] to-[#d0d0da]">
        <span className="h-2 w-0.5 bg-[#777]" />
        <span className="h-2 w-0.5 bg-[#777]" />
        <span className="h-2 w-0.5 bg-[#777]" />
      </div>
      <button aria-label="Scroll right" className="ml-auto">
        <Svg className="size-2.5" box="0 0 10 10">
          <path d="M2 0v10l6-5z" fill="#333" />
        </Svg>
      </button>
    </div>
  </aside>
);

/* ---------- viewport ---------- */

const headsUp = [
  { name: "Zoom to Fit", icon: <Glass /> },
  { name: "Zoom to Area", icon: <Glass dashed /> },
  { name: "Previous View", icon: <PrevView /> },
  { name: "Section View", icon: <Section /> },
  { name: "View Orientation", icon: <ViewOrient />, menu: true },
  { name: "Display Style", icon: <DisplayStyle />, menu: true },
  { name: "Hide/Show Items", icon: <HideShow />, menu: true },
  { name: "Edit Appearance", icon: <Ball /> },
  { name: "Apply Scene", icon: <Scene />, menu: true },
  { name: "View Settings", icon: <GoldBall />, menu: true },
];

const Model = () => (
  <svg viewBox="289 188 1743 1292" className="absolute inset-0 size-full" role="img" aria-label="Loft3">
    <defs>
      <linearGradient id="side" gradientUnits="userSpaceOnUse" x1="660" y1="0" x2="1660" y2="0">
        <stop offset="0" stopColor="#656877" />
        <stop offset=".08" stopColor="#5c5f6d" />
        <stop offset=".2" stopColor="#525463" />
        <stop offset=".4" stopColor="#545362" />
        <stop offset=".52" stopColor="#575a67" />
        <stop offset=".6" stopColor="#5a5d6a" />
        <stop offset=".75" stopColor="#565965" />
        <stop offset=".9" stopColor="#5a5d6a" />
        <stop offset="1" stopColor="#60636f" />
      </linearGradient>
    </defs>
    <path
      d="M684 645L660 957q-1 15 17 28l482 279q23 12 50 12 27 0 49-12l383-222q21-13 20-33l-19-245-5-60-1-60z"
      fill="url(#side)"
      stroke="#1e2030"
      strokeWidth="2"
    />
    <ellipse cx="1160" cy="654" rx="475" ry="275" fill="#7e7e94" stroke="#1e2030" strokeWidth="2" />
  </svg>
);

const Triad = () => (
  <svg viewBox="0 0 90 84" className="h-[84px] w-[90px]" aria-hidden="true">
    <path d="M44 56V28" stroke="#1c5c24" strokeWidth="5" />
    <path d="M44 18l7 9-4 5h-6l-4-5z" fill="#1f7a2c" />
    <path d="M44 56L22 67" stroke="#1c1c90" strokeWidth="5" />
    <path d="M12 74l9-12 7 11z" fill="#2424b8" />
    <path d="M44 56l24 12" stroke="#b01c1c" strokeWidth="5" />
    <path d="M76 73l-15 0 6-11z" fill="#d82424" />
    <g className="font-['Liberation_Sans',sans-serif] text-[15px]">
      <text x="44" y="15" textAnchor="middle" fill="#4a7a54">Y</text>
      <text x="8" y="80" textAnchor="middle" fill="#3a3ad0">Z</text>
      <text x="79" y="80" textAnchor="middle" fill="#f04848">X</text>
    </g>
  </svg>
);

const Viewport = () => (
  <section className="relative flex min-w-0 flex-1 flex-col justify-end border-b-2 border-[#3c3c4c]">
    <Model />
    <div className="absolute inset-x-0 -top-5 flex items-center justify-center gap-[9px] pr-3">
      {headsUp.map((h) => (
        <button key={h.name} aria-label={h.name} className="flex items-center gap-1.5">
          {h.icon}
          {h.menu && <Caret />}
        </button>
      ))}
    </div>
    <div className="absolute -top-4 right-3 flex items-center gap-4">
      <button aria-label="Minimize document">
        <Minimize />
      </button>
      <button aria-label="Restore document">
        <Restore />
      </button>
      <button aria-label="Close document">
        <Close />
      </button>
    </div>
    <button aria-label="Collapse panel" className="absolute top-[611px] -left-[3px] flex h-[42px] w-[15px] items-center justify-center rounded-r-md border-y-2 border-r-2 border-[#77788c] bg-[#e2e3ec]">
      <Svg className="h-8 w-2" box="0 0 8 32">
        <path d="M7 1v8L2 5zM7 12v8l-5-4zM7 23v8l-5-4z" fill="#55566a" />
      </Svg>
    </button>
    <div className="relative flex flex-col items-start gap-7 pl-4">
      <Triad />
      <span className={`text-[18px] leading-6 font-bold text-[#34345c] ${UI}`}>*Isometric</span>
    </div>
  </section>
);

const taskPane = [
  { name: "SolidWorks Resources", icon: <House /> },
  { name: "Design Library", icon: <Library /> },
  { name: "File Explorer", icon: <FolderOpen /> },
  { name: "SolidWorks Search", icon: <SwSearch /> },
  { name: "View Palette", icon: <Palette /> },
  { name: "Appearances", icon: <Ball /> },
  { name: "Custom Properties", icon: <Properties plain /> },
];

const TaskPane = () => (
  <div className="absolute top-[86px] -right-[6px] flex flex-col">
    {taskPane.map((t, i) => (
      <button
        key={t.name}
        aria-label={t.name}
        className={`flex h-[35px] w-[34px] items-center justify-center rounded-l-md border-2 border-r-0 border-[#85869c] ${i === 0 ? "bg-[#f2f2fa]" : "bg-[#b9bacb]"}`}>
        {t.icon}
      </button>
    ))}
  </div>
);

const navPaths = ["M5 3v14M17 3v14L8 10z", "M15 3v14L6 10z", "M6 3v14l9-7z", "M16 3v14M4 3v14l9-7z"];
const navNames = ["First", "Previous", "Next", "Last"];

const ModelTabs = () => (
  <div className={`flex h-[21px] shrink-0 items-start bg-[#e4e4ef] text-[17px] leading-[18px] text-[#23232f] ${ARIAL}`}>
    <div className="flex h-full w-[100px] items-center bg-[#b4b4ca] pl-1">
      {navPaths.map((d, i) => (
        <button key={d} aria-label={navNames[i]} className="flex h-5 w-6 items-center justify-center border border-[#9a9ab0]">
          <Svg className="size-4" box="0 0 20 20">
            <path d={d} fill="#8c8ca4" stroke="#8c8ca4" strokeWidth="2" />
          </Svg>
        </button>
      ))}
    </div>
    <button className="h-5 w-[79px] border-x-2 border-b-2 border-[#5c5c70] bg-[#dedeee] font-bold">Model</button>
    <button className="h-5 w-[149px] border-r-2 border-b-2 border-[#5c5c70] bg-[#bcbcd0] pr-2">Motion Study 1</button>
  </div>
);

const StatusBar = () => (
  <footer className={`flex h-[30px] shrink-0 items-center border-t-2 border-b-2 border-[#77788c] bg-gradient-to-b from-[#cfcfe2] to-[#b4b4ca] pl-[3px] text-[16px] text-[#23232f] ${TREE}`}>
    <span className="flex-1">SolidWorks Student Edition - Academic Use Only</span>
    <span className="border-x border-[#c4c4d4] px-2">Editing Part</span>
    <button aria-label="Tags" className="mr-5 ml-[132px]">
      <Svg className="size-[22px]">
        <path d="M13 2h8l2 3v7L11 23l-5-1-4-7z" fill="#f5d83a" stroke="#8a6a10" strokeWidth="2" />
        <circle cx="18" cy="6.500" r="2" fill="#fff" stroke="#8a6a10" />
        <path d="M7 15l6-6M10 18l6-6" stroke="#a8842a" strokeWidth="1.500" />
      </Svg>
    </button>
  </footer>
);

export default function App() {
  return (
    <div className="flex h-screen flex-col overflow-hidden border-t-[10px] border-r-8 border-b-[3px] border-l-[9px] border-[#cc0099] bg-[#c5c6d4]">
      <TitleBar />
      <Ribbon />
      <main className="relative flex min-h-0 flex-1 flex-col border-r-[6px] border-[#7b7d8e]">
        <div className="flex min-h-0 flex-1 flex-col border-r-2 border-[#2e2e3c] bg-gradient-to-b from-[#c4c6d3] to-[#c7c7d3]">
          <CommandTabs />
          <div className="flex min-h-0 flex-1">
            <FeaturePanel />
            <Viewport />
          </div>
          <ModelTabs />
        </div>
        <TaskPane />
      </main>
      <StatusBar />
    </div>
  );
}
